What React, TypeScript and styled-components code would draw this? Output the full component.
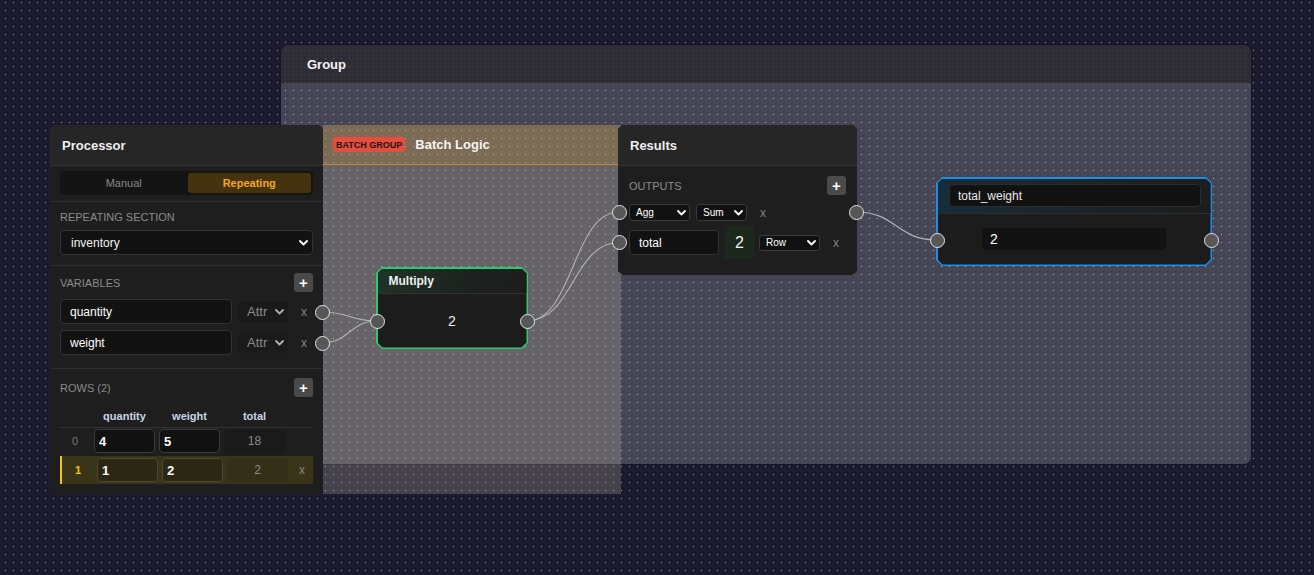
import React from "react";
import styled, { createGlobalStyle, css } from "styled-components";

const FONT = `"Liberation Sans", Arial, Helvetica, sans-serif`;

const GlobalStyle = createGlobalStyle`
  html, body { margin: 0; padding: 0; background: #1b1a2e; overflow: hidden; }
  *, *::before, *::after { box-sizing: border-box; }
  #root { width: 1314px; height: 575px; }
`;

const chamfer = (c: number) =>
  `polygon(${c}px 0, calc(100% - ${c}px) 0, 100% ${c}px, 100% calc(100% - ${c}px), calc(100% - ${c}px) 100%, ${c}px 100%, 0 calc(100% - ${c}px), 0 ${c}px)`;

/* ---------- canvas ---------- */
const Canvas = styled.div`
  position: relative;
  width: 1314px;
  height: 575px;
  overflow: hidden;
  background: #1b1a2e;
  font-family: ${FONT};
`;

const Layer = styled.svg`
  position: absolute;
  left: 0;
  top: 0;
  pointer-events: none;
`;

const FlowNode = styled.div<{ $x: number; $y: number; $w: number; $h: number }>`
  position: absolute;
  left: ${(p) => p.$x}px;
  top: ${(p) => p.$y}px;
  width: ${(p) => p.$w}px;
  height: ${(p) => p.$h}px;
`;

/* ---------- group ---------- */
const GroupBox = styled(FlowNode)`
  display: flex;
  flex-direction: column;
  border-radius: 8px;
  overflow: hidden;
  border: 1px solid rgba(0, 0, 0, 0.16);
`;
const GroupHead = styled.div`
  height: 38px;
  flex: none;
  display: flex;
  align-items: center;
  padding-left: 26px;
  background: rgba(58, 57, 56, 0.62);
  color: #f4f4f4;
  font: 700 13px ${FONT};
`;
const GroupBody = styled.div`
  flex: 1;
  background: rgba(255, 255, 255, 0.19);
`;

/* ---------- batch group ---------- */
const BatchBox = styled(FlowNode)`
  display: flex;
  flex-direction: column;
`;
const BatchHead = styled.div`
  height: 40px;
  flex: none;
  display: flex;
  align-items: center;
  gap: 10px;
  padding-left: 10px;
  background: rgba(200, 160, 85, 0.42);
  border-bottom: 1px solid rgba(230, 140, 50, 0.75);
`;
const Badge = styled.span`
  height: 15px;
  display: inline-flex;
  align-items: center;
  padding: 1px 3px 0;
  border-radius: 3px;
  background: #e74c3c;
  color: #1a1a1a;
  font: 700 9px/1 ${FONT};
`;
const BatchTitle = styled.span`
  color: #f5f5f5;
  font: 700 13px ${FONT};
`;
const BatchBody = styled.div`
  flex: 1;
  background: rgba(210, 195, 170, 0.24);
`;

/* ---------- node parts ---------- */
const NodeCard = styled.div`
  width: 100%;
  height: 100%;
  display: flex;
  flex-direction: column;
  background: #1e1e1e;
  clip-path: ${chamfer(4)};
`;
const NodeHeader = styled.div`
  height: 41px;
  flex: none;
  display: flex;
  align-items: center;
  padding: 0 11px 0 12px;
  background: #262626;
  border-bottom: 1px solid #333;
  color: #efefef;
  font: 700 13px ${FONT};
`;
const FrameOuter = styled.div<{ $color: string }>`
  width: 100%;
  height: 100%;
  padding: 1.5px;
  background: ${(p) => p.$color};
  clip-path: ${chamfer(6)};
`;
const FrameInner = styled.div`
  width: 100%;
  height: 100%;
  display: flex;
  flex-direction: column;
  background: #1c1c1c;
  clip-path: ${chamfer(5)};
`;
const Handle = styled.div<{ $side: "left" | "right"; $top: number }>`
  position: absolute;
  top: ${(p) => p.$top - 7.5}px;
  ${(p) => p.$side}: -6.5px;
  width: 15px;
  height: 15px;
  border-radius: 50%;
  background: #575757;
  border: 1.5px solid #e4e4e4;
  z-index: 2;
`;

const Section = styled.div<{ $pad: string; $last?: boolean }>`
  display: flex;
  flex-direction: column;
  padding: ${(p) => p.$pad};
  border-bottom: ${(p) => (p.$last ? "none" : "1px solid #2e2e2e")};
`;
const Label = styled.div<{ $mb?: number }>`
  font: 400 11px/14px ${FONT};
  color: #8c8c8c;
  text-transform: uppercase;
  margin-bottom: ${(p) => p.$mb ?? 0}px;
`;
const LabelRow = styled.div<{ $mb: number }>`
  height: 19px;
  flex: none;
  display: flex;
  align-items: center;
  justify-content: space-between;
  margin-bottom: ${(p) => p.$mb}px;
`;
const PlusButton = styled.div`
  width: 19px;
  height: 19px;
  border-radius: 3px;
  background: #4a4a4a;
  color: #fff;
  display: flex;
  align-items: center;
  justify-content: center;
  font: 700 15px/1 ${FONT};
`;

const Toggle = styled.div`
  height: 24px;
  display: grid;
  grid-template-columns: 1fr 1fr;
  gap: 2px;
  padding: 2px;
  border-radius: 4px;
  background: #141414;
`;
const Seg = styled.div<{ $active?: boolean }>`
  display: flex;
  align-items: center;
  justify-content: center;
  border-radius: 3px;
  font: 11px ${FONT};
  ${(p) =>
    p.$active
      ? css`
          background: #45330f;
          color: #f5a623;
          font-weight: 700;
        `
      : css`
          color: #8a8a8a;
        `}
`;

const SelectBox = styled.div<{ $kind: "wide" | "attr" | "mini"; $w?: number; $h?: number }>`
  flex: none;
  display: flex;
  align-items: center;
  justify-content: space-between;
  font-family: ${FONT};
  ${(p) =>
    p.$kind === "wide"
      ? css`
          width: 100%;
          height: 25px;
          padding: 0 4px 0 10px;
          border: 1px solid #333;
          border-radius: 4px;
          background: #121212;
          color: #f2f2f2;
          font-size: 12px;
        `
      : p.$kind === "attr"
      ? css`
          width: 50px;
          height: 20px;
          padding: 0 4px 0 9px;
          border-radius: 3px;
          background: #1a1a1a;
          color: #8a8a8a;
          font-size: 13px;
        `
      : css`
          width: ${p.$w}px;
          height: ${p.$h}px;
          padding: 0 3px 0 6px;
          border: 1px solid #3a3a3a;
          border-radius: 3px;
          background: #111;
          color: #fff;
          font-size: 10px;
        `}
`;

const Chevron = ({ color = "#fff" }: { color?: string }) => (
  <svg width="9" height="6" viewBox="0 0 9 6" fill="none">
    <path d="M1 1l3.5 3.5L8 1" stroke={color} strokeWidth="1.8" strokeLinecap="round" strokeLinejoin="round" />
  </svg>
);

const TextField = styled.input<{ $w?: number }>`
  width: ${(p) => (p.$w ? `${p.$w}px` : "100%")};
  height: 25px;
  flex: none;
  padding: 0 9px;
  border: 1px solid #333;
  border-radius: 4px;
  background: #121212;
  color: #fff;
  font: 12px ${FONT};
  outline: none;
`;
const RemoveX = styled.span`
  width: 20px;
  flex: none;
  text-align: center;
  color: #858585;
  font: 12px ${FONT};
`;
const VarRow = styled.div<{ $mt: number }>`
  display: flex;
  align-items: center;
  gap: 6px;
  height: 25px;
  margin-top: ${(p) => p.$mt}px;
`;

/* ---------- rows table ---------- */
const TableGrid = styled.div`
  display: grid;
  grid-template-columns: 30px 61px 61px 61px 1fr;
  column-gap: 4px;
  align-items: center;
`;
const TableHead = styled(TableGrid)`
  height: 23px;
  border-bottom: 1px solid #333;
  font: 700 11px ${FONT};
  color: #cbd5e6;
  text-align: center;
`;
const TableRow = styled(TableGrid)<{ $active?: boolean }>`
  height: ${(p) => (p.$active ? 28 : 24)}px;
  margin-top: ${(p) => (p.$active ? 3 : 1)}px;
  ${(p) =>
    p.$active &&
    css`
      background: #3a3519;
      border-left: 2px solid #f5c518;
      padding-left: 1px;
    `}
`;
const IndexCell = styled.span<{ $active?: boolean }>`
  text-align: center;
  font: ${(p) => (p.$active ? 700 : 400)} 11px ${FONT};
  color: ${(p) => (p.$active ? "#f5c518" : "#777")};
`;
const CellInput = styled.input<{ $active?: boolean }>`
  width: 100%;
  height: 24px;
  padding: 0 0 0 4px;
  border-radius: 4px;
  border: 1px solid ${(p) => (p.$active ? "#4d4830" : "#3a3a3a")};
  background: ${(p) => (p.$active ? "#2a2715" : "#111")};
  color: #fff;
  font: 700 13px ${FONT};
  outline: none;
`;
const TotalCell = styled.div<{ $active?: boolean }>`
  height: 24px;
  border-radius: 4px;
  display: flex;
  align-items: center;
  justify-content: center;
  background: ${(p) => (p.$active ? "#332f18" : "#1a1a1a")};
  color: #8a8a8a;
  font: 12px ${FONT};
`;

/* ---------- results ---------- */
const ResultsBody = styled.div`
  display: flex;
  flex-direction: column;
  padding: 10px 11px 0;
`;
const OutRow = styled.div<{ $h: number; $mt: number }>`
  display: flex;
  align-items: center;
  height: ${(p) => p.$h}px;
  margin-top: ${(p) => p.$mt}px;
`;
const Gap = styled.span<{ $w: number }>`
  width: ${(p) => p.$w}px;
  flex: none;
`;
const LiveValue = styled.div`
  width: 29px;
  height: 33px;
  flex: none;
  display: flex;
  align-items: center;
  justify-content: center;
  background: #1b281b;
  color: #f0f0f0;
  font: 16px ${FONT};
`;

/* ---------- compute nodes ---------- */
const MathHeader = styled.div`
  height: 25px;
  flex: none;
  display: flex;
  align-items: center;
  padding-left: 11px;
  background: linear-gradient(120deg, #1f3427 0%, #1d221f 60%, #1c1c1c 100%);
  border-bottom: 1px solid #333;
  color: #f0f0f0;
  font: 700 12px ${FONT};
`;
const MathValue = styled.div`
  flex: 1;
  display: flex;
  align-items: center;
  justify-content: center;
  color: #eee;
  font: 14px ${FONT};
`;
const OutHeader = styled.div`
  height: 35px;
  flex: none;
  display: flex;
  align-items: center;
  padding: 0 9.5px 0 11.5px;
  background: linear-gradient(120deg, #172d3b 0%, #1b2328 60%, #1c1c1c 100%);
  border-bottom: 1px solid #2e2e2e;
`;
const OutName = styled.input`
  width: 100%;
  height: 23px;
  padding: 0 8px;
  border: 1px solid #2c2c2c;
  border-radius: 4px;
  background: #121212;
  color: #e8e8e8;
  font: 12px ${FONT};
  outline: none;
`;
const OutBody = styled.div`
  flex: 1;
  display: flex;
  align-items: center;
  justify-content: center;
`;
const OutValue = styled.div`
  width: 184px;
  height: 22px;
  padding-left: 8px;
  display: flex;
  align-items: center;
  border-radius: 4px;
  background: #121212;
  color: #fff;
  font: 14px ${FONT};
`;

/* ---------- edges ---------- */
type Pt = [number, number];
const edges: [Pt, Pt][] = [
  [[322, 312], [377, 321]],
  [[322, 343], [377, 321]],
  [[527, 321], [619, 212]],
  [[527, 321], [619, 242.5]],
  [[856, 212], [937, 240]],
];
const bezier = ([sx, sy]: Pt, [tx, ty]: Pt) => {
  const mx = (sx + tx) / 2;
  return `M${sx},${sy} C${mx},${sy} ${mx},${ty} ${tx},${ty}`;
};

const variables = ["quantity", "weight"];
const rows = [
  { i: 0, q: "4", w: "5", t: "18" },
  { i: 1, q: "1", w: "2", t: "2", active: true },
];

export default function App() {
  return (
    <>
      <GlobalStyle />
      <Canvas>
        <Layer width={1314} height={575}>
          <defs>
            <pattern id="grid-dots" x={5} y={2} width={8} height={8} patternUnits="userSpaceOnUse">
              <rect width={1} height={1} fill="#a4a4c0" />
            </pattern>
          </defs>
          <rect width={1314} height={575} fill="url(#grid-dots)" />
        </Layer>

        <GroupBox $x={280} $y={44} $w={972} $h={421}>
          <GroupHead>Group</GroupHead>
          <GroupBody />
        </GroupBox>

        <BatchBox $x={323} $y={125} $w={298} $h={369}>
          <BatchHead>
            <Badge>BATCH GROUP</Badge>
            <BatchTitle>Batch Logic</BatchTitle>
          </BatchHead>
          <BatchBody />
        </BatchBox>

        <Layer width={1314} height={575}>
          {edges.map(([s, t], k) => (
            <path key={k} d={bezier(s, t)} fill="none" stroke="#b4b4b4" strokeWidth={1.1} />
          ))}
        </Layer>

        {/* Processor */}
        <FlowNode $x={50} $y={125} $w={273} $h={369}>
          <NodeCard>
            <NodeHeader>Processor</NodeHeader>
            <Section $pad="5px 10px 6px">
              <Toggle>
                <Seg>Manual</Seg>
                <Seg $active>Repeating</Seg>
              </Toggle>
            </Section>
            <Section $pad="8px 10px 10px">
              <Label $mb={6}>Repeating Section</Label>
              <SelectBox $kind="wide">
                <span>inventory</span>
                <Chevron />
              </SelectBox>
            </Section>
            <Section $pad="7px 10px 13px">
              <LabelRow $mb={0}>
                <Label>Variables</Label>
                <PlusButton>+</PlusButton>
              </LabelRow>
              {variables.map((v, k) => (
                <VarRow key={v} $mt={k === 0 ? 7 : 6}>
                  <TextField $w={172} readOnly value={v} />
                  <SelectBox $kind="attr">
                    <span>Attr</span>
                    <Chevron color="#b0b0b0" />
                  </SelectBox>
                  <RemoveX>x</RemoveX>
                </VarRow>
              ))}
            </Section>
            <Section $pad="9px 10px 10px" $last>
              <LabelRow $mb={8}>
                <Label>Rows (2)</Label>
                <PlusButton>+</PlusButton>
              </LabelRow>
              <TableHead>
                <span />
                <span>quantity</span>
                <span>weight</span>
                <span>total</span>
                <span />
              </TableHead>
              {rows.map((r) => (
                <TableRow key={r.i} $active={r.active}>
                  <IndexCell $active={r.active}>{r.i}</IndexCell>
                  <CellInput $active={r.active} readOnly value={r.q} />
                  <CellInput $active={r.active} readOnly value={r.w} />
                  <TotalCell $active={r.active}>{r.t}</TotalCell>
                  {r.active ? <RemoveX>x</RemoveX> : <span />}
                </TableRow>
              ))}
            </Section>
          </NodeCard>
          <Handle $side="right" $top={187} />
          <Handle $side="right" $top={218} />
        </FlowNode>

        {/* Multiply */}
        <FlowNode $x={376} $y={267} $w={152} $h={82}>
          <FrameOuter $color="#2dc96e">
            <FrameInner>
              <MathHeader>Multiply</MathHeader>
              <MathValue>2</MathValue>
            </FrameInner>
          </FrameOuter>
          <Handle $side="left" $top={54} />
          <Handle $side="right" $top={54} />
        </FlowNode>

        {/* Results */}
        <FlowNode $x={618} $y={125} $w={239} $h={150}>
          <NodeCard>
            <NodeHeader>Results</NodeHeader>
            <ResultsBody>
              <LabelRow $mb={0}>
                <Label>Outputs</Label>
                <PlusButton>+</PlusButton>
              </LabelRow>
              <OutRow $h={17} $mt={9}>
                <SelectBox $kind="mini" $w={61} $h={17}>
                  <span>Agg</span>
                  <Chevron />
                </SelectBox>
                <Gap $w={6} />
                <SelectBox $kind="mini" $w={51} $h={17}>
                  <span>Sum</span>
                  <Chevron />
                </SelectBox>
                <Gap $w={6} />
                <RemoveX>x</RemoveX>
              </OutRow>
              <OutRow $h={33} $mt={5}>
                <TextField $w={90} readOnly value="total" />
                <Gap $w={6} />
                <LiveValue>2</LiveValue>
                <Gap $w={5} />
                <SelectBox $kind="mini" $w={61} $h={16}>
                  <span>Row</span>
                  <Chevron />
                </SelectBox>
                <Gap $w={6} />
                <RemoveX>x</RemoveX>
              </OutRow>
            </ResultsBody>
          </NodeCard>
          <Handle $side="left" $top={87} />
          <Handle $side="left" $top={117.5} />
          <Handle $side="right" $top={87} />
        </FlowNode>

        {/* total_weight */}
        <FlowNode $x={936} $y={177} $w={276} $h={89}>
          <FrameOuter $color="#1a8fe3">
            <FrameInner>
              <OutHeader>
                <OutName readOnly value="total_weight" />
              </OutHeader>
              <OutBody>
                <OutValue>2</OutValue>
              </OutBody>
            </FrameInner>
          </FrameOuter>
          <Handle $side="left" $top={63} />
          <Handle $side="right" $top={63} />
        </FlowNode>
      </Canvas>
    </>
  );
}
